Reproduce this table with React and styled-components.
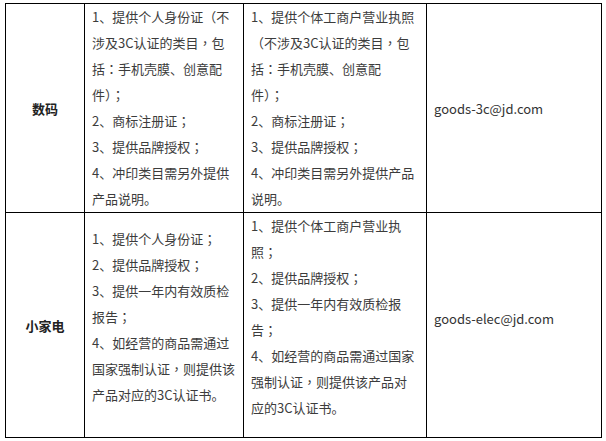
import styled, { createGlobalStyle } from "styled-components";

const GlobalStyle = createGlobalStyle`
	body {
		margin: 0;
		background: #fff;
		font-family: "Microsoft YaHei", "Noto Sans CJK SC", "Noto Sans", sans-serif;
	}
`;

const rows = [
	{
		name: "数码",
		personal: [
			"1、提供个人身份证（不",
			"涉及3C认证的类目，包",
			"括：手机壳膜、创意配",
			"件）；",
			"2、商标注册证；",
			"3、提供品牌授权；",
			"4、冲印类目需另外提供",
			"产品说明。",
		],
		business: [
			"1、提供个体工商户营业执照",
			"（不涉及3C认证的类目，包",
			"括：手机壳膜、创意配",
			"件）；",
			"2、商标注册证；",
			"3、提供品牌授权；",
			"4、冲印类目需另外提供产品",
			"说明。",
		],
		email: "goods-3c@jd.com",
		height: 207,
	},
	{
		name: "小家电",
		personal: [
			"1、提供个人身份证；",
			"2、提供品牌授权；",
			"3、提供一年内有效质检",
			"报告；",
			"4、如经营的商品需通过",
			"国家强制认证，则提供该",
			"产品对应的3C认证书。",
		],
		business: [
			"1、提供个体工商户营业执",
			"照；",
			"2、提供品牌授权；",
			"3、提供一年内有效质检报",
			"告；",
			"4、如经营的商品需通过国家",
			"强制认证，则提供该产品对",
			"应的3C认证书。",
		],
		email: "goods-elec@jd.com",
		height: 224,
		personalTop: 13,
		businessBottom: 16,
		emailBottom: 13,
	},
];

const renderLine = (text) =>
	text.split(/([（），：；])/).map((part, i) =>
		i % 2 ? <Punct key={i}>{part}</Punct> : part
	);

export default function App() {
	return (
		<>
			<GlobalStyle />
			<Table>
				<colgroup>
					<col style={{ width: 79 }} />
					<col style={{ width: 159 }} />
					<col style={{ width: 183 }} />
					<col style={{ width: 175 }} />
				</colgroup>
				<tbody>
					{rows.map((row) => (
						<Row key={row.name} $height={row.height}>
							<Category>{row.name}</Category>
							<Cell $top={row.personalTop}>
								{row.personal.map((l, i) => (
									<Line key={i}>{renderLine(l)}</Line>
								))}
							</Cell>
							<Cell $bottom={row.businessBottom}>
								{row.business.map((l, i) => (
									<Line key={i}>{renderLine(l)}</Line>
								))}
							</Cell>
							<Email $bottom={row.emailBottom}>{row.email}</Email>
						</Row>
					))}
				</tbody>
			</Table>
		</>
	);
}

const Table = styled.table`
	margin: 3px 0 0 5px;
	width: 596px;
	table-layout: fixed;
	border-collapse: collapse;
	font-size: 13px;
	color: #3c3c3c;
`;

const Row = styled.tr`
	height: ${({ $height }) => $height}px;
`;

const Cell = styled.td`
	border: 1px solid #000;
	padding: ${({ $top }) => $top || 0}px 7px ${({ $bottom }) => $bottom || 0}px;
	vertical-align: ${({ $top }) => ($top ? "top" : "middle")};
`;

const Category = styled(Cell)`
	text-align: center;
	font-weight: 700;
	color: #222;
`;

const Email = styled(Cell)`
	color: #333;
`;

const Line = styled.div`
	line-height: 26px;
	white-space: nowrap;
`;

const Punct = styled.span`
	font-family: "Noto Sans CJK TC", "Noto Sans CJK SC", sans-serif;
`;
